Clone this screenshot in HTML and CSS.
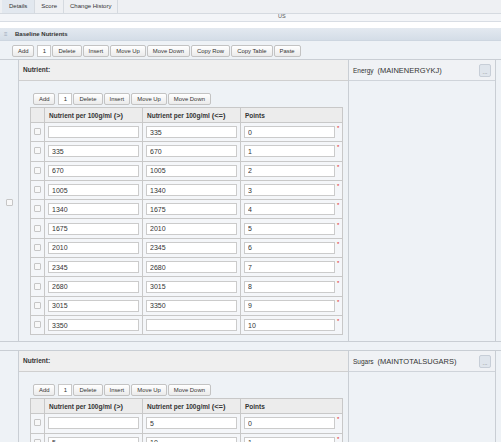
FILE: index.html
```html
<!DOCTYPE html>
<html lang="en">
<head>
    <meta charset="UTF-8">
    <title>Nutrient Score - Details</title>
    <link rel="stylesheet" href="styles.css">
</head>
<body>
    <!-- Tabs -->
    <div class="tabs">
        <span class="tab active">Details</span><span class="tab">Score</span><span class="tab">Change History</span>
    </div>
    <div class="strip"><span class="country">US</span></div>

    <!-- Baseline Nutrients section -->
    <div class="section">
        <div class="section-head"><span class="collapse">&#8801;</span>Baseline Nutrients</div>
        <div class="toolbar main-toolbar">
            <button class="btn">Add</button><input class="count" value="1"><button class="btn">Delete</button><button class="btn">Insert</button><button class="btn">Move Up</button><button class="btn">Move Down</button><button class="btn">Copy Row</button><button class="btn">Copy Table</button><button class="btn">Paste</button>
        </div>

        <div class="item" id="energy">
            <div class="sel"><span class="check"></span></div>
            <div class="main">
                <div class="main-head">Nutrient:</div>
                <div class="main-body">
                    <div class="toolbar">
                        <button class="btn">Add</button><input class="count" value="1"><button class="btn">Delete</button><button class="btn">Insert</button><button class="btn">Move Up</button><button class="btn">Move Down</button>
                    </div>
                    <table class="grid">
                        <thead>
                            <tr><th class="c0"></th><th>Nutrient per 100g/ml <span class="op">(&gt;)</span></th><th>Nutrient per 100g/ml <span class="op">(&lt;=)</span></th><th>Points</th></tr>
                        </thead>
                        <tbody></tbody>
                    </table>
                </div>
            </div>
            <div class="lookup">
                <div class="lookup-head"><span class="name">Energy</span><span class="code">(MAINENERGYKJ)</span><span class="pick">...</span></div>
            </div>
        </div>

        <div class="item" id="sugars">
            <div class="sel"><span class="check"></span></div>
            <div class="main">
                <div class="main-head">Nutrient:</div>
                <div class="main-body">
                    <div class="toolbar">
                        <button class="btn">Add</button><input class="count" value="1"><button class="btn">Delete</button><button class="btn">Insert</button><button class="btn">Move Up</button><button class="btn">Move Down</button>
                    </div>
                    <table class="grid">
                        <thead>
                            <tr><th class="c0"></th><th>Nutrient per 100g/ml <span class="op">(&gt;)</span></th><th>Nutrient per 100g/ml <span class="op">(&lt;=)</span></th><th>Points</th></tr>
                        </thead>
                        <tbody></tbody>
                    </table>
                </div>
            </div>
            <div class="lookup">
                <div class="lookup-head"><span class="name">Sugars</span><span class="code">(MAINTOTALSUGARS)</span><span class="pick">...</span></div>
            </div>
        </div>
    </div>

    <script>
        // Score bands per nutrient: upper limits, points = band index
        const bands = {
            energy: [335, 670, 1005, 1340, 1675, 2010, 2345, 2680, 3015, 3350],
            sugars: [5, 10, 15, 20, 25, 30, 35, 40, 45, 50]
        };

        function fillGrid(id, limits) {
            const body = document.querySelector('#' + id + ' tbody');
            for (let i = 0; i <= limits.length; i++) {
                const from = i === 0 ? '' : limits[i - 1];
                const to = i < limits.length ? limits[i] : '';
                const row = document.createElement('tr');
                row.innerHTML =
                    '<td class="c0"><span class="check"></span></td>' +
                    '<td><input class="cell" value="' + from + '"></td>' +
                    '<td><input class="cell" value="' + to + '"></td>' +
                    '<td><input class="cell" value="' + i + '"><span class="req">*</span></td>';
                body.appendChild(row);
            }
        }

        fillGrid('energy', bands.energy);
        fillGrid('sugars', bands.sugars);
    </script>
</body>
</html>
```

FILE: styles.css
```css
/* Global styling */
* {
    margin: 0;
    padding: 0;
    box-sizing: border-box;
}
html, body {
    background-color: #fff;
    font-family: 'Liberation Sans', Arial, sans-serif;
    font-size: 6px;
    color: #333;
    overflow: hidden;
}
/* Tabs */
.tabs {
    display: flex;
    height: 14px;
    padding-left: 2px;
    background-color: #eef0f3;
    border-bottom: 1px solid #d5dae0;
}
.tab {
    padding: 0 6px;
    line-height: 13px;
    border-right: 1px solid #d5dae0;
}
.tab.active {
    background-color: #e2e8ef;
    padding: 0 7px;
}
.strip {
    height: 8px;
    background-color: #f3f5f8;
    border-bottom: 1px solid #d8dde4;
    overflow: hidden;
    margin-bottom: 6px;
}
.country {
    display: block;
    margin-left: 278px;
    line-height: 4px;
    font-size: 5.5px;
    color: #555;
}
/* Section */
.section {
    background-color: #eef2f6;
    padding-bottom: 20px;
}
.section-head {
    height: 13px;
    line-height: 13px;
    font-weight: bold;
    background: linear-gradient(#e3e9f0, #d4dde7);
    border-bottom: 1px solid #cdd6e0;
}
.collapse {
    display: inline-block;
    width: 15px;
    padding-left: 4px;
    text-align: left;
    color: #9aa8b8;
    font-weight: normal;
}
/* Toolbars and buttons */
.toolbar {
    display: flex;
    align-items: center;
    height: 14px;
}
.main-toolbar {
    height: 18px;
    padding: 4px 0 2px 12px;
}
.btn {
    height: 12px;
    padding: 0 5px;
    margin-right: 1px;
    border: 1px solid #c3c3c3;
    border-radius: 2px;
    background: linear-gradient(#fff, #ebebeb);
    font-family: inherit;
    font-size: 5.9px;
    color: #333;
}
.count {
    width: 14px;
    height: 12px;
    margin: 0 1px 0 2px;
    border: 1px solid #c9c9c9;
    background-color: #fff;
    font-family: inherit;
    font-size: 6px;
    text-align: center;
    color: #333;
}
/* Nutrient rows */
.item {
    display: flex;
    border-top: 1px solid #c9ced4;
    border-bottom: 1px solid #c9ced4;
    margin-bottom: 8px;
}
.sel {
    width: 18px;
    display: flex;
    align-items: center;
    justify-content: center;
    padding-top: 3px;
}
.check {
    display: inline-block;
    width: 7px;
    height: 7px;
    border: 1px solid #c6c6c6;
    border-radius: 1px;
    background-color: #f8f8f8;
}
.main {
    width: 331px;
    border-left: 1px solid #c9ced4;
    border-right: 1px solid #c9ced4;
}
.main-head {
    height: 21px;
    padding: 6px 4px 0;
    font-size: 6.5px;
    font-weight: bold;
    background-color: #efefef;
    border-bottom: 1px solid #cfcfcf;
}
.main-body {
    padding: 11px 4px 6px 11px;
}
.main-body .toolbar {
    padding-left: 3px;
    margin-bottom: 1px;
}
/* Score band grid */
.grid {
    width: 313px;
    border-collapse: collapse;
    table-layout: fixed;
}
.grid th, .grid td {
    border: 1px solid #c8c8c8;
}
.grid th {
    height: 15px;
    padding-left: 4px;
    text-align: left;
    font-size: 6.5px;
    background-color: #ececec;
}
.grid .c0 {
    width: 14px;
    padding: 0;
    text-align: center;
}
.grid th:nth-child(2), .grid th:nth-child(3) {
    width: 98px;
}
.grid td {
    height: 19.3px;
    padding: 0 0 0 3px;
    background-color: #f4f6f9;
    white-space: nowrap;
    vertical-align: middle;
}
.grid td.c0 {
    padding: 0;
}
.op {
    font-size: 7.5px;
}
.cell {
    width: 91px;
    height: 12px;
    padding-left: 3px;
    border: 1px solid #cbcbcb;
    background-color: #fff;
    font-family: inherit;
    font-size: 7px;
    color: #333;
    vertical-align: middle;
}
.req {
    display: inline-block;
    margin-left: 2px;
    color: #d22;
    font-size: 6px;
    line-height: 4px;
    height: 4px;
    vertical-align: top;
}
/* Lookup column */
.lookup {
    width: 147px;
    border-right: 1px solid #c9ced4;
}
.lookup-head {
    display: flex;
    align-items: center;
    height: 21px;
    padding: 0 4px;
    background-color: #f0f2f5;
    border-bottom: 1px solid #cfd4da;
}
.name {
    font-size: 6.5px;
    margin-right: 4px;
}
.code {
    font-size: 7.5px;
}
.pick {
    margin-left: auto;
    width: 12px;
    height: 13px;
    line-height: 15px;
    text-align: center;
    font-size: 6px;
    color: #777;
    border: 1px solid #c7ced7;
    border-radius: 2px;
    background-color: #dfe5ec;
}
```
